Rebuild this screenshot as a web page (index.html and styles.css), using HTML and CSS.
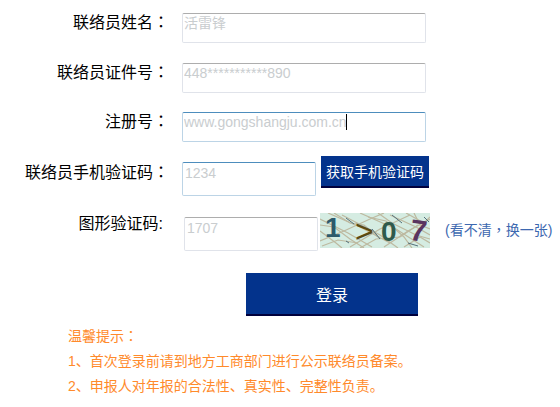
FILE: index.html
```html
<!DOCTYPE html>
<html lang="en">
<head>
  <meta charset="UTF-8" />
  <meta name="viewport" content="width=device-width, initial-scale=1.0" />
  <title>联络员登录</title>
  <link rel="stylesheet" href="styles.css">
</head>
<body>

  <form class="login-form">
    <div class="form-row row-name">
      <label class="row-label" for="lianName">联络员姓名<span class="colon">：</span></label>
      <input class="text-input" type="text" id="lianName" placeholder="活雷锋"/>
    </div>

    <div class="form-row row-cert">
      <label class="row-label" for="lianCert">联络员证件号<span class="colon">：</span></label>
      <input class="text-input" type="text" id="lianCert" placeholder="448***********890"/>
    </div>

    <div class="form-row row-reg">
      <label class="row-label" for="regNo">注册号<span class="colon">：</span></label>
      <div class="input-wrap">
        <input class="text-input focused" type="text" id="regNo" placeholder="www.gongshangju.com.cn"/>
        <span class="caret"></span>
      </div>
    </div>

    <div class="form-row row-phone">
      <label class="row-label" for="phoneCode">联络员手机验证码<span class="colon">：</span></label>
      <input class="text-input focused short" type="text" id="phoneCode" placeholder="1234"/>
      <button class="sms-btn" type="button">获取手机验证码</button>
    </div>

    <div class="form-row row-captcha">
      <label class="row-label" for="picCode">图形验证码:</label>
      <input class="text-input short" type="text" id="picCode" placeholder="1707"/>
      <svg class="captcha" width="110" height="35" viewBox="0 0 110 35">
        <rect width="110" height="35" fill="#d5ece2"/>
        <g fill="none" stroke="#bdb9a0" stroke-width="1.2">
          <path d="M0 6 L28 20 L52 34"/>
          <path d="M8 0 L40 14 L70 30"/>
          <path d="M22 2 L60 22 L78 35"/>
          <path d="M40 0 L76 16 L104 34"/>
          <path d="M70 2 L96 14 L110 22"/>
          <path d="M0 28 L24 18 L50 6 L64 0"/>
          <path d="M30 34 L60 16 L90 2"/>
          <path d="M64 34 L88 18 L110 6"/>
          <path d="M0 18 L16 30 L22 35"/>
          <path d="M84 34 L100 24 L110 30"/>
          <path d="M86 0 L104 10 L110 4"/>
          <path d="M2 33 L18 27 L38 30"/>
          <path d="M14 0 L30 10 L44 12 L58 24"/>
          <path d="M48 4 L66 8 L84 24 L92 35"/>
          <path d="M0 12 L14 14 L30 26 L44 35"/>
          <path d="M58 0 L72 10 L96 22 L110 26"/>
          <path d="M40 35 L56 26 L80 24 L98 12"/>
          <path d="M94 0 L100 12 L110 16"/>
        </g>
        <g fill="none" stroke="#54707a" stroke-width="1">
          <path d="M26 5 L34 11"/>
          <path d="M72 2 L82 10"/>
          <path d="M52 16 L60 26"/>
          <path d="M88 30 L98 33"/>
          <path d="M26 28 L29 30"/>
          <path d="M104 4 L109 9"/>
        </g>
        <text class="captcha-digit" x="5" y="24" fill="#2d5a6b" font-size="28">1</text>
        <text class="captcha-digit thin" x="35" y="29" fill="#5c4a12" font-size="32">&gt;</text>
        <text class="captcha-digit" x="61" y="28" fill="#2f5a4c" font-size="28">0</text>
        <text class="captcha-digit" x="90" y="28" fill="#5a3560" font-size="30" transform="rotate(8 99 18)">7</text>
      </svg>
      <a class="swap-link" href="#">(看不清<span class="colon">，</span>换一张)</a>
    </div>

    <div class="submit-row">
      <button class="login-btn" type="button">登录</button>
    </div>
  </form>

  <div class="tips">
    <p>温馨提示<span class="colon">：</span></p>
    <p>1、首次登录前请到地方工商部门进行公示联络员备案。</p>
    <p>2、申报人对年报的合法性、真实性、完整性负责。</p>
  </div>

</body>
</html>
```

FILE: styles.css
```css
* {
  margin: 0;
  padding: 0;
  box-sizing: border-box;
  font-family: "Liberation Sans", "Noto Sans CJK SC", sans-serif;
}

body {
  background: #fff;
  color: #000;
  padding-top: 13px;
  overflow: hidden;
}

/* full-width punctuation sits centred in the cell */
.colon {
  font-family: "Noto Sans CJK TC", sans-serif;
  line-height: 1;
}

.form-row {
  display: flex;
  align-items: flex-start;
}

.row-cert {
  margin-top: 20px;
}

.row-reg {
  margin-top: 19px;
}

.row-phone {
  margin-top: 14px;
}

.row-captcha {
  margin-top: 17px;
}

.row-label {
  width: 169px;
  flex: none;
  margin-right: 13px;
  font-size: 16px;
  line-height: 18px;
  text-align: right;
}

.text-input {
  display: block;
  width: 244px;
  height: 30px;
  padding: 0 1px 10px;
  border: 1px solid #e0e3ea;
  border-top-color: #adadad;
  border-radius: 2px;
  background: #fff;
  font-size: 14px;
  outline: none;
}

.text-input::placeholder {
  color: #c9cdcf;
  opacity: 1;
}

.text-input.focused {
  border-color: #bcd4e6;
  border-top-color: #4d8dbd;
}

.text-input.short {
  width: 134px;
  height: 34px;
  padding-left: 2px;
  padding-bottom: 13px;
}

.input-wrap {
  position: relative;
}

.caret {
  position: absolute;
  left: 164px;
  top: 2px;
  width: 1px;
  height: 16px;
  background: #000;
}

.sms-btn {
  width: 108px;
  height: 32px;
  margin-left: 5px;
  border: none;
  border-bottom: 2px solid #00003c;
  background: #03338c;
  color: #fff;
  font-size: 14px;
}

/* the button sits higher than the input in this row */
.row-phone .row-label {
  margin-top: 7px;
}

.row-phone .text-input {
  margin-top: 6px;
}

.row-captcha .row-label {
  width: 163px;
  margin-top: 2px;
  margin-right: 21px;
}

.row-captcha .text-input {
  margin-top: 4px;
}

.captcha {
  display: block;
  flex: none;
  margin-left: 2px;
}

.captcha-digit {
  font-family: "Liberation Sans", sans-serif;
  font-weight: bold;
}

.captcha-digit.thin {
  font-weight: normal;
}

.swap-link {
  margin-left: 15px;
  margin-top: 8px;
  font-size: 14px;
  line-height: 18px;
  white-space: nowrap;
  color: #3d68b0;
  text-decoration: none;
}

.submit-row {
  margin-top: 22px;
  padding-left: 246px;
}

.login-btn {
  display: block;
  width: 172px;
  height: 43px;
  border: none;
  border-bottom: 2px solid #00003c;
  background: #03338c;
  color: #fff;
  font-size: 16px;
}

.tips {
  margin-top: 8px;
  padding-left: 68px;
  color: #ff8a2b;
  font-size: 14px;
  line-height: 25px;
}
```
